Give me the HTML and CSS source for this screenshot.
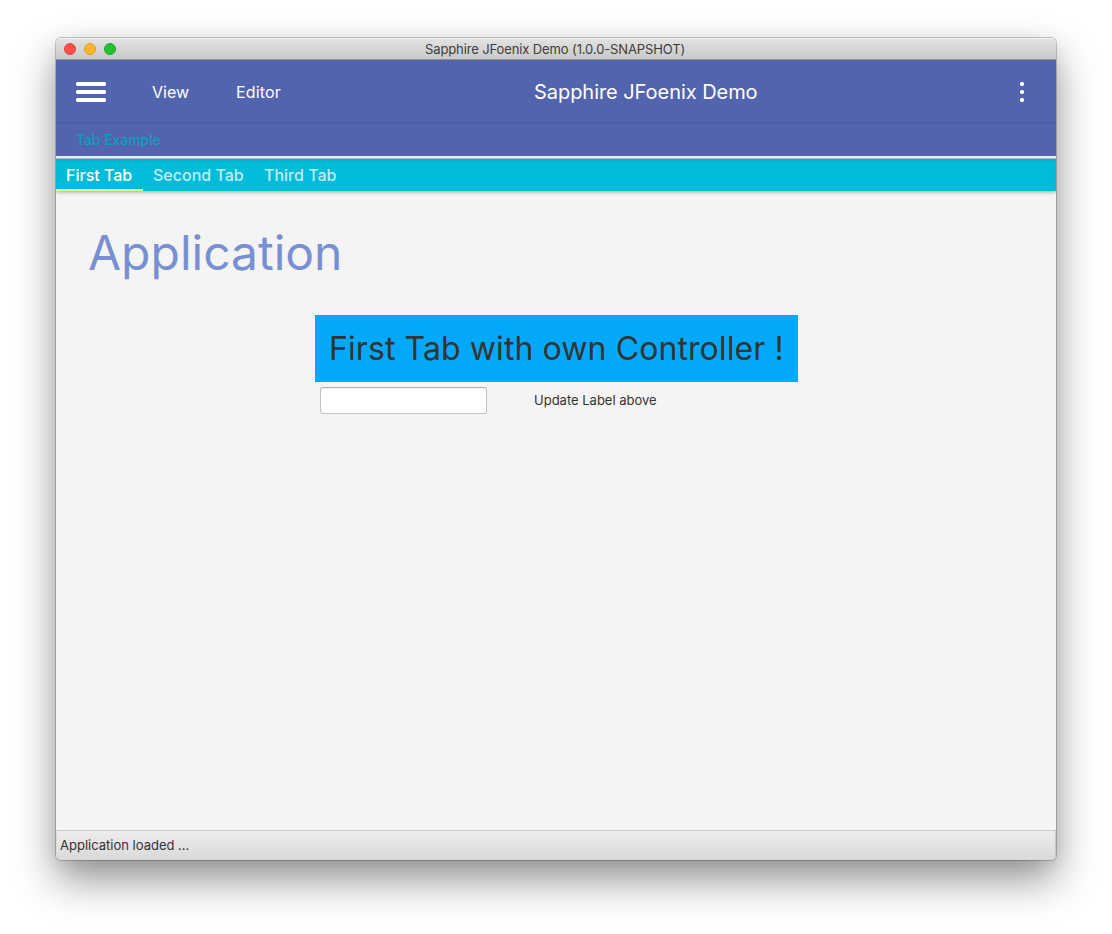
FILE: index.html
```html
<!DOCTYPE html>
<html lang="en">
<head>
<meta charset="utf-8">
<title>Sapphire JFoenix Demo</title>
<link rel="stylesheet" href="styles.css">
</head>
<body>
<div class="window">
  <div class="titlebar">
    <div class="lights"><i class="light close"></i><i class="light minimize"></i><i class="light maximize"></i></div>
    <div class="window-title"><span>Sapphire JFoenix Demo (1.0.0-SNAPSHOT)</span></div>
  </div>
  <header class="toolbar">
    <svg class="burger" width="30" height="20" viewBox="0 0 30 20"><g fill="#fff"><rect width="30" height="4" rx="1.5"/><rect y="8" width="30" height="4" rx="1.5"/><rect y="16" width="30" height="4" rx="1.5"/></g></svg>
    <nav class="menu"><span class="view">View</span><span class="editor">Editor</span></nav>
    <div class="app-title"><span>Sapphire JFoenix Demo</span></div>
    <svg class="dots" width="4" height="20" viewBox="0 0 4 20"><g fill="#fff"><circle cx="2" cy="2" r="2.1"/><circle cx="2" cy="10" r="2.1"/><circle cx="2" cy="18" r="2.1"/></g></svg>
  </header>
  <div class="subbar"><span>Tab Example</span></div>
  <div class="tabs">
    <div class="tab selected"><span>First Tab</span></div>
    <div class="tab second"><span>Second Tab</span></div>
    <div class="tab third"><span>Third Tab</span></div>
  </div>
  <main class="content">
    <h1><span>Application</span></h1>
    <div class="panel">
      <div class="banner"><span>First Tab with own Controller !</span></div>
      <div class="form"><input class="field" type="text"><button class="update"><span>Update Label above</span></button></div>
    </div>
  </main>
  <footer class="status"><span>Application loaded ...</span></footer>
</div>
</body>
</html>
```
FILE: styles.css
```css
* { box-sizing: border-box; }
body { margin: 0; height: 934px; overflow: hidden; background: #fff; font-family: Inter, "Liberation Sans", sans-serif; padding: 38px 56px; }
span { white-space: nowrap; }
.window { width: 1000px; height: 822px; display: flex; flex-direction: column; background: #f4f4f4; border-radius: 5px; overflow: hidden; box-shadow: 0 0 0 1px rgba(0,0,0,.2), 0 20px 42px rgba(0,0,0,.42), 0 3px 20px rgba(0,0,0,.08); }
.titlebar { height: 22px; flex: none; display: grid; grid-template-columns: 369px 1fr; align-items: start; background: linear-gradient(#e2e2e2, #c9c9c9); border-top: 1px solid #f2f2f2; border-bottom: 1px solid #929292; }
.lights { display: flex; gap: 8px; padding: 4px 0 0 8px; }
.light { width: 12px; height: 12px; border-radius: 50%; }
.close { background: #ff5149; border: 1px solid #e2443e; }
.minimize { background: #ffb62a; border: 1px solid #df9c24; }
.maximize { background: #26c133; border: 1px solid #1fa62b; }
.window-title { font-size: 13px; line-height: 20px; color: #3d3d3d; letter-spacing: -.12px; }
.toolbar { height: 64px; flex: none; display: flex; align-items: center; padding: 0 32px 0 20px; background: #5264ae; color: #fff; box-shadow: inset 0 -1px 0 #4c5da5, inset 0 -3px 3px rgba(0,0,0,.025); }
.menu { display: flex; margin-left: 46px; font-size: 16px; }
.view { width: 84px; }
.editor { width: 298px; letter-spacing: .15px; }
.app-title { flex: 1; font-size: 20px; letter-spacing: -.05px; }
.subbar { height: 32px; flex: none; background: #5264ae; color: #00a9c4; font-size: 14px; line-height: 32px; padding-left: 20px; }
.tabs { height: 32px; flex: none; margin-top: 3px; display: flex; background: #00bcd8; box-shadow: 0 -1px 1px rgba(0,0,0,.15), 0 1px 4px rgba(0,0,0,.35), inset 0 3px 3px rgba(0,0,0,.05); color: rgba(255,255,255,.76); font-size: 16px; font-weight: 500; line-height: 33px; }
.tab { padding-left: 10px; }
.selected { width: 87px; color: #fff; border-bottom: 2px solid #ffff8d; }
.second { width: 111px; }
.third { width: 92px; }
.content { flex: 1; padding-top: 32px; }
h1 { margin: 0 0 0 32px; height: 92px; line-height: 60px; font-size: 48px; font-weight: 400; color: #7890d2; }
.panel { width: 483px; margin-left: 259px; }
.banner { height: 67px; background: #03a9f8; color: #333; font-size: 32px; line-height: 67px; padding-left: 14px; letter-spacing: .09px; }
.form { display: flex; padding: 5px 0 0 5px; gap: 47px; }
.field { width: 167px; height: 27px; border: 1px solid #c2c2c2; border-top-color: #b4b4b4; border-radius: 3px; background: #fff; box-shadow: inset 0 1px 1px #eee; padding: 3px 7px; font: inherit; }
.update { border: 0; padding: 0; background: none; color: #333; font: 13px/27px Inter, "Liberation Sans", sans-serif; }
.status { height: 30px; flex: none; border: 1px solid #c8c8c8; border-bottom: 0; border-left-color: #ddd; background: linear-gradient(#ededed, #d9d9d9); color: #333; font-size: 13px; line-height: 29px; padding-left: 3px; }
```
